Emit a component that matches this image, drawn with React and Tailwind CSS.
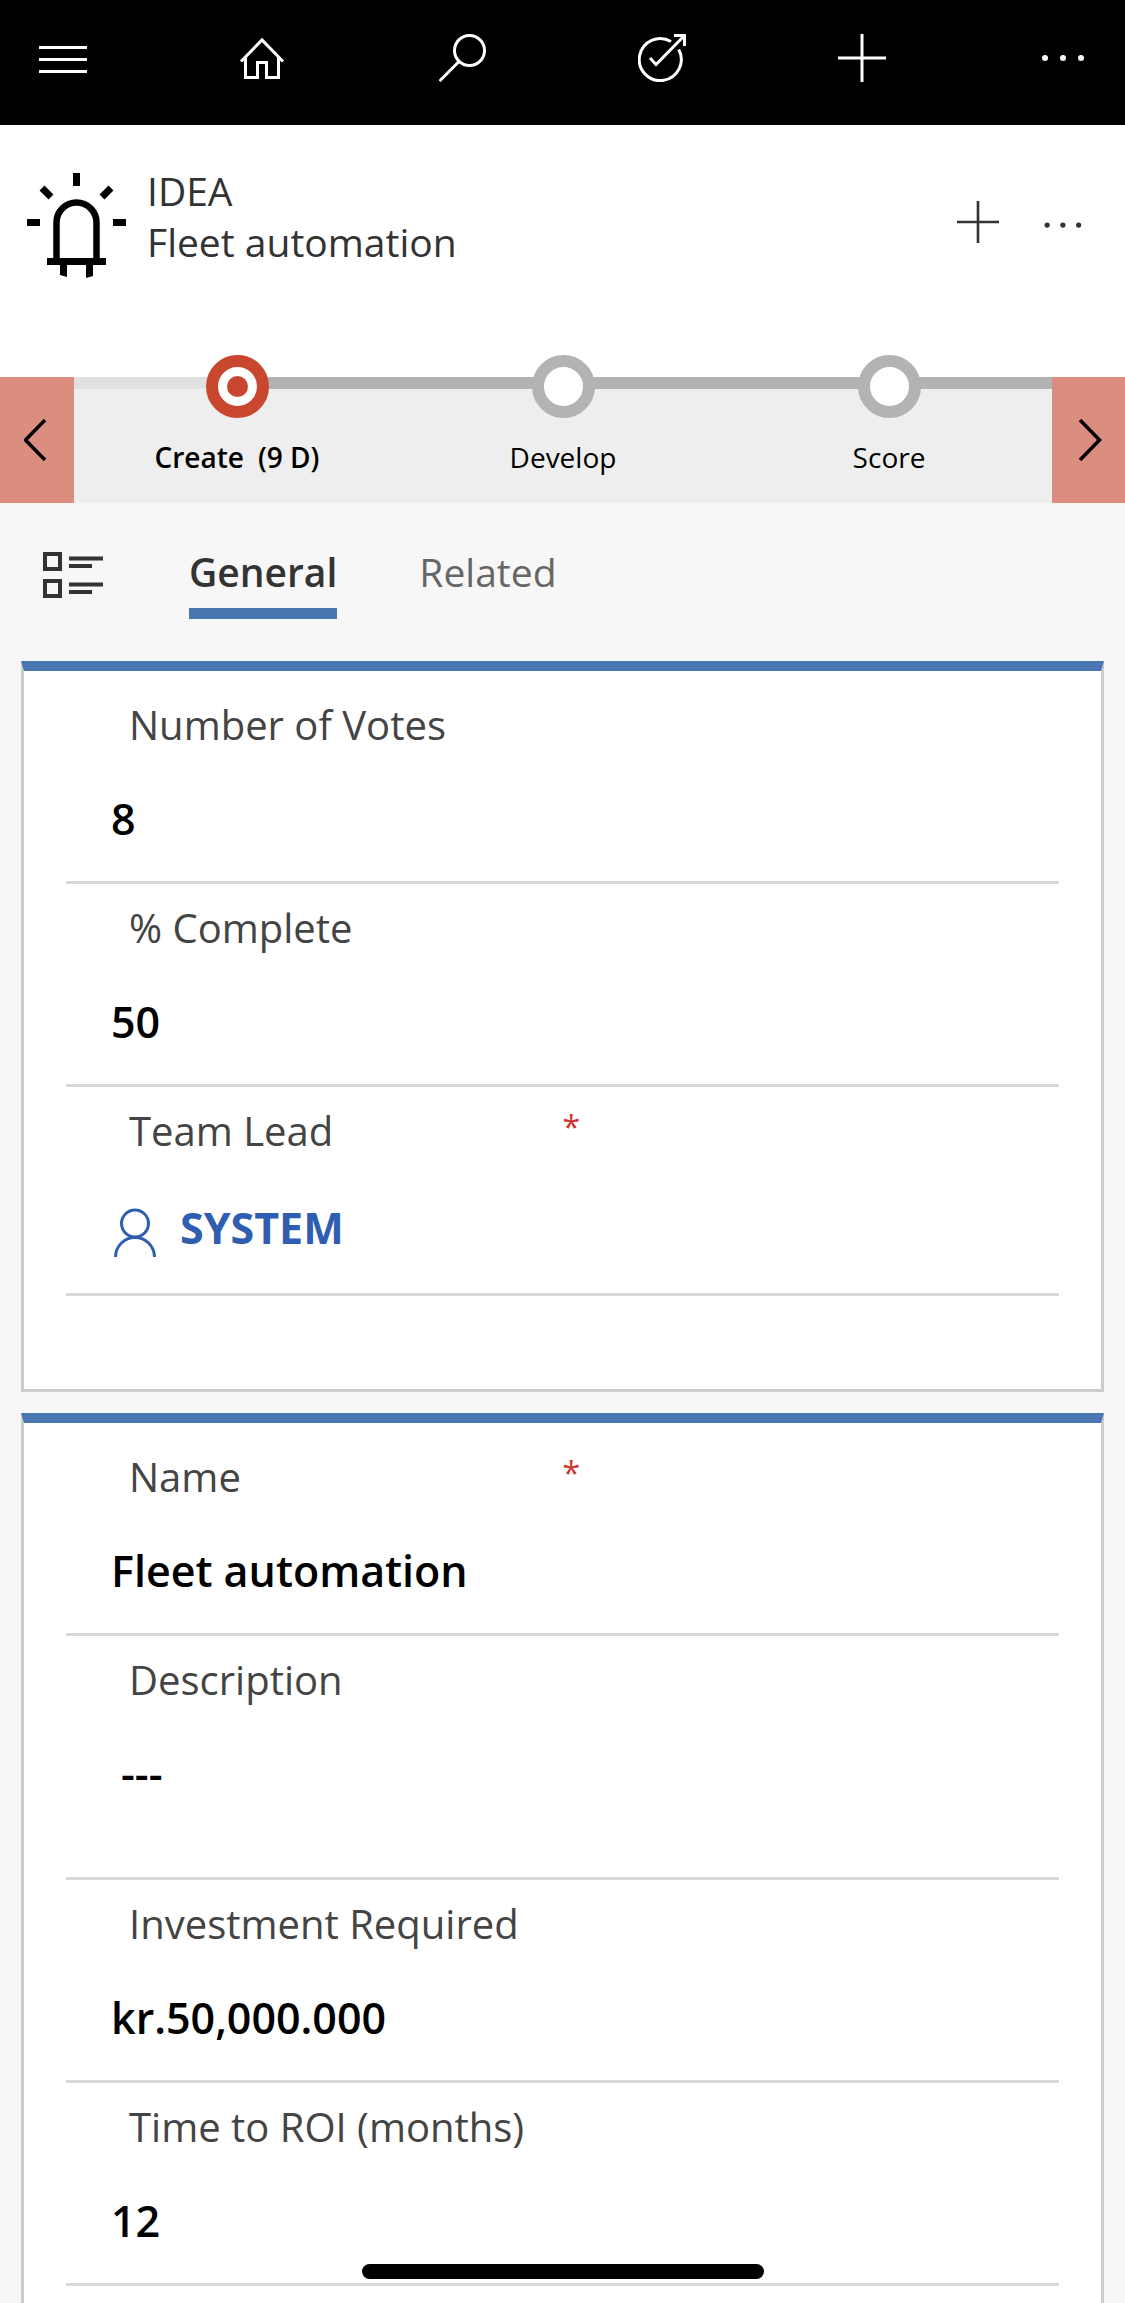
import React from 'react';

const MenuIcon = () => (
  <svg viewBox="0 0 48 48" className="w-12 h-12" stroke="currentColor" strokeWidth="3" fill="none">
    <path d="M0 13.5H48M0 25.5H48M0 37.5H48" />
  </svg>
);

const HomeIcon = () => (
  <svg viewBox="0 0 48 48" className="w-12 h-12" stroke="currentColor" strokeWidth="3" fill="none">
    <path d="M2 27.5L23 6L44 27.5" />
    <path d="M6.5 23.5V43.5H18.5V28.5H27.5V43.5H39.5V23.5" />
  </svg>
);

const SearchIcon = () => (
  <svg viewBox="0 0 48 48" className="w-12 h-12" stroke="currentColor" strokeWidth="3" fill="none">
    <circle cx="30.5" cy="16.5" r="15" />
    <path d="M20 27.5L0.5 47" />
  </svg>
);

const TaskIcon = () => (
  <svg viewBox="0 0 48 48" className="w-12 h-12" stroke="currentColor" strokeWidth="3" fill="none">
    <path d="M33 7.5A21 21 0 1 0 40.7 15.5" />
    <path d="M12 24L18 30.5L46 2" />
    <path d="M36 1.5H46.5V12" />
  </svg>
);

const PlusIcon = ({ className }) => (
  <svg viewBox="0 0 48 48" className={className} stroke="currentColor" strokeWidth="3" fill="none">
    <path d="M24 0V48M0 24H48" />
  </svg>
);

const MoreIcon = ({ className }) => (
  <svg viewBox="0 0 48 48" className={className} fill="currentColor">
    <circle cx="7" cy="24" r="3" />
    <circle cx="25" cy="24" r="3" />
    <circle cx="43" cy="24" r="3" />
  </svg>
);

const IdeaIcon = () => (
  <svg viewBox="0 0 100 105" className="w-[100px] h-[105px] shrink-0" stroke="black" fill="none">
    <path strokeWidth="7" d="M49.5 0V13M0 49.5H13M86 49.5H99M15 15L24 24M84 15L75 24" />
    <path strokeWidth="6.5" d="M29.5 88V49.5A20 20 0 0 1 69.5 49.5V88" />
    <path strokeWidth="7" d="M20 88.5H79" />
    <path fill="black" stroke="none" d="M33 91H40V104L33 102ZM59 91H66V103L59 105Z" />
  </svg>
);

const FormIcon = () => (
  <svg viewBox="0 0 60 46" className="w-[60px] h-[46px]" stroke="currentColor" strokeWidth="4" fill="none">
    <path d="M2 2H17V17H2ZM2 29H17V44H2Z" />
    <path d="M26 6.5H60M26 14H49M26 32.5H60M26 40H49" />
  </svg>
);

const PersonIcon = () => (
  <svg viewBox="0 0 42 60" className="w-[42px] h-[60px]" stroke="currentColor" strokeWidth="3" fill="none">
    <circle cx="21" cy="25.5" r="13.5" />
    <path d="M1.5 59A19.5 19.5 0 0 1 40.5 59" />
  </svg>
);

const Chevron = ({ d }) => (
  <svg viewBox="0 0 26 42" className="w-[26px] h-[42px]" stroke="black" strokeWidth="3.5" fill="none">
    <path d={d} />
  </svg>
);

const navItems = [
  { label: 'Menu', icon: <MenuIcon /> },
  { label: 'Home', icon: <HomeIcon /> },
  { label: 'Search', icon: <SearchIcon /> },
  { label: 'Tasks', icon: <TaskIcon /> },
  { label: 'New', icon: <PlusIcon className="w-12 h-12" /> },
  { label: 'More', icon: <MoreIcon className="w-12 h-12" /> },
];

const stages = [
  { name: 'Create', duration: '(9 D)', active: true },
  { name: 'Develop' },
  { name: 'Score' },
];

const Stage = ({ name, duration, active }) => (
  <li className="flex flex-col items-center">
    {active ? (
      <span className="flex items-center justify-center w-[63px] h-[63px] rounded-full border-12 border-[#c9472f] bg-white">
        <span className="w-[21px] h-[21px] rounded-full bg-[#c9472f]"></span>
      </span>
    ) : (
      <span className="w-[63px] h-[63px] rounded-full border-12 border-[#b3b3b3] bg-white"></span>
    )}
    <span className={active ? 'flex gap-3.5 mt-[19px] text-[28px] leading-10 font-semibold' : 'mt-[19px] text-[28px] leading-10'}>
      {name}
      {duration && <span>{duration}</span>}
    </span>
  </li>
);

const Field = ({ id, label, required, children }) => (
  <div className="pt-3.5 pb-8 border-b-3 border-[#d8d8d8]">
    <div className="flex items-start">
      <label htmlFor={id} className="w-1/2 pl-[63px] text-[40px] leading-[60px] text-[#444444]">
        {label}
      </label>
      {required && <span className="text-[32px] leading-[52px] text-[#d0342c]">*</span>}
    </div>
    <div className="mt-[34px] pl-[45px]">{children}</div>
  </div>
);

const TextInput = ({ id, value }) => (
  <input
    id={id}
    type="text"
    defaultValue={value}
    className="block w-full h-[60px] text-[43px] leading-[60px] font-semibold text-black bg-transparent outline-none"
  />
);

const App = () => {
  return (
    <div className="min-h-screen flex flex-col bg-[#f7f7f7] text-black font-['Open_Sans','Noto_Sans',sans-serif]">
      <nav className="flex justify-between px-[39px] pt-[34px] pb-[43px] bg-black text-white">
        {navItems.map((item) => (
          <button key={item.label} type="button" aria-label={item.label}>
            {item.icon}
          </button>
        ))}
      </nav>

      <header className="flex items-start pt-10 pb-[99px] pl-[27px] pr-[42px] bg-white text-[#333333]">
        <div className="mt-2">
          <IdeaIcon />
        </div>
        <div className="flex-1 pl-5 text-[39px] leading-[51px]">
          <p>IDEA</p>
          <h1>Fleet automation</h1>
        </div>
        <div className="flex items-start gap-[42px] pt-9">
          <button type="button" aria-label="Add">
            <PlusIcon className="w-[42px] h-[42px]" />
          </button>
          <button type="button" aria-label="More commands">
            <MoreIcon className="w-[42px] h-[48px]" />
          </button>
        </div>
      </header>

      <section className="flex">
        <button type="button" aria-label="Previous stage" className="flex items-center justify-center w-[74px] bg-[#db8d7f]">
          <Chevron d="M21 1L1.5 21L21 41" />
        </button>
        <div className="flex-1 bg-[#eeeeee]">
          <div className="flex h-3">
            <div className="w-1/6 bg-[#e1e1e1]"></div>
            <div className="flex-1 bg-[#b3b3b3]"></div>
          </div>
          <ol className="relative grid grid-cols-3 -mt-[34px] pb-[26px]">
            {stages.map((stage) => (
              <Stage key={stage.name} {...stage} />
            ))}
          </ol>
        </div>
        <button type="button" aria-label="Next stage" className="flex items-center justify-center w-[73px] bg-[#db8d7f]">
          <Chevron d="M4 1L23.5 21L4 41" />
        </button>
      </section>

      <div className="flex items-start pt-[43px] pb-[42px] pl-[43px] text-[39px] leading-[52px]">
        <button type="button" aria-label="Form sections" className="mt-1.5 mr-[86px] text-[#333333]">
          <FormIcon />
        </button>
        <div role="tablist" className="flex gap-[82px]">
          <button type="button" role="tab" aria-selected="true" className="pb-2.5 border-b-11 border-[#4a76b2] font-semibold text-[#333333]">
            General
          </button>
          <button type="button" role="tab" aria-selected="false" className="pb-2.5 border-b-11 border-transparent text-[#666666]">
            Related
          </button>
        </div>
      </div>

      <main className="flex-1 flex flex-col gap-[21px] px-[21px]">
        <section className="px-[42px] pt-2.5 pb-[93px] bg-white border-3 border-t-10 border-[#cccccc] border-t-[#4a76b2]">
          <Field id="votes" label="Number of Votes">
            <TextInput id="votes" value="8" />
          </Field>
          <Field id="complete" label="% Complete">
            <TextInput id="complete" value="50" />
          </Field>
          <Field id="lead" label="Team Lead" required>
            <a id="lead" href="#lead" className="flex items-center gap-6 h-[66px] pl-[3px] text-[43px] font-bold text-[#2f5eb0]">
              <PersonIcon />
              SYSTEM
            </a>
          </Field>
        </section>

        <section className="flex-1 px-[42px] pt-2.5 bg-white border-3 border-t-10 border-b-0 border-[#cccccc] border-t-[#4a76b2]">
          <Field id="name" label="Name" required>
            <TextInput id="name" value="Fleet automation" />
          </Field>
          <Field id="description" label="Description">
            <textarea
              id="description"
              defaultValue="---"
              className="block w-full h-[101px] pl-2.5 text-[43px] leading-[60px] font-semibold text-black bg-transparent resize-none outline-none"
            />
          </Field>
          <Field id="investment" label="Investment Required">
            <TextInput id="investment" value="kr.50,000.000" />
          </Field>
          <Field id="roi" label="Time to ROI (months)">
            <TextInput id="roi" value="12" />
          </Field>
        </section>
      </main>

      <div className="fixed bottom-6 left-1/2 -translate-x-1/2 w-[402px] h-[15px] rounded-full bg-black"></div>
    </div>
  );
};

export default App;
